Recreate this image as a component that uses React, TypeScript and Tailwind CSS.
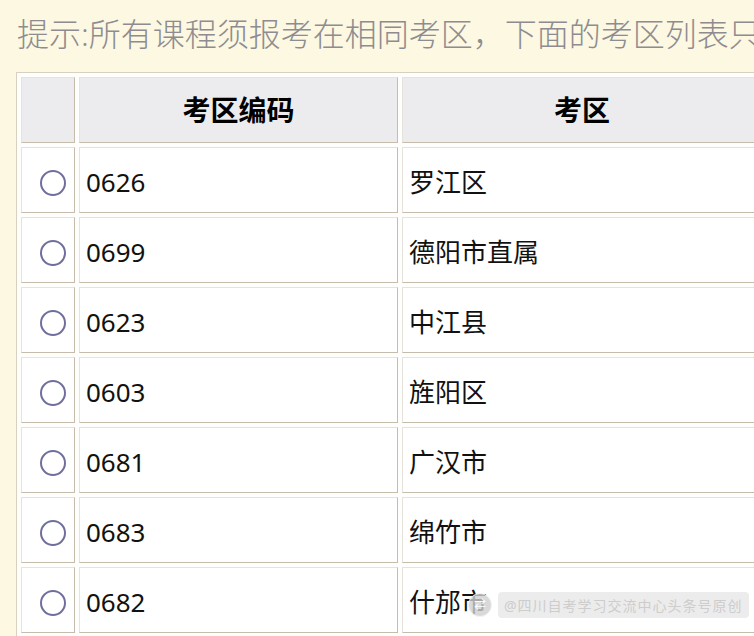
import React from "react";

const rows = [
  { code: "0626", name: "罗江区" },
  { code: "0699", name: "德阳市直属" },
  { code: "0623", name: "中江县" },
  { code: "0603", name: "旌阳区" },
  { code: "0681", name: "广汉市" },
  { code: "0683", name: "绵竹市" },
  { code: "0682", name: "什邡市" },
  { code: "0684", name: "什邡市" },
];

const font = { fontFamily: "'Noto Sans', 'Noto Sans CJK SC', sans-serif" };

const cell =
  "h-[66px] border border-t-[#e6e2dc] border-l-[#e6e2dc] border-r-[#c6bcab] border-b-[#c6bcab] flex items-center";

export default function App() {
  return (
    <div
      className="relative w-[754px] h-[636px] overflow-hidden bg-[#fcf8e2]"
      style={font}
    >
      {/* Hint line */}
      <div className="pl-[17px] pt-[12px] h-[72px] whitespace-nowrap text-[32px] leading-[44px] font-light text-[#8e8c90]">
        提示:所有课程须报考在相同考区，下面的考区列表只显示满足条件的考区
      </div>

      {/* Table */}
      <div className="ml-[16px] w-max grid grid-cols-[54px_319px_360px] gap-[4px] p-[4px] border border-[#d8d1c0] bg-[#fefefd]">
        <div className={`${cell} bg-[#ececee]`} />
        <div className={`${cell} bg-[#ececee] justify-center text-[28px] font-bold text-black`}>
          考区编码
        </div>
        <div className={`${cell} bg-[#ececee] justify-center text-[28px] font-bold text-black`}>
          考区
        </div>

        {rows.map((r, i) => (
          <React.Fragment key={i}>
            <div className={`${cell} bg-white justify-center pl-[9px] pt-[5px]`}>
              <span className="w-[26px] h-[26px] rounded-full border-[2.5px] border-[#6f6f9e] bg-white" />
            </div>
            <div className={`${cell} bg-white pl-[6px] pt-[4px] text-[26px] text-[#111]`}>
              {r.code}
            </div>
            <div className={`${cell} bg-white pl-[6px] pt-[4px] text-[26px] text-[#111]`}>
              {r.name}
            </div>
          </React.Fragment>
        ))}
      </div>

      {/* Watermark overlay */}
      <div className="absolute left-[468px] top-[592px] flex items-center gap-[6px]">
        <span className="w-[24px] h-[24px] rounded-full bg-[#cfcfcf]/80 border border-[#f4f4f4] flex items-center justify-center text-[12px] text-white">
          ⇄
        </span>
        <span className="px-[6px] h-[26px] rounded-[4px] bg-[#e4e4e4]/70 flex items-center text-[14px] tracking-[1px] text-[#cdcdcd] whitespace-nowrap">
          @四川自考学习交流中心头条号原创
        </span>
      </div>
    </div>
  );
}
